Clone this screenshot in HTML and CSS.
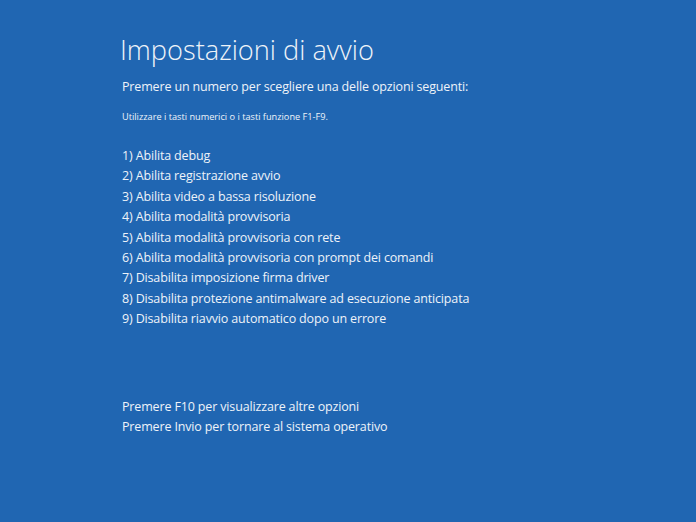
FILE: index.html
```html
<!DOCTYPE html>
<html lang="it">
<head>
<meta charset="utf-8">
<link rel="stylesheet" href="styles.css">
</head>
<body>
<main class="screen">
  <h1 class="title">Impostazioni di avvio</h1>
  <p class="lead">Premere un numero per scegliere una delle opzioni seguenti:</p>
  <p class="hint">Utilizzare i tasti numerici o i tasti funzione F1-F9.</p>
  <ol class="options">
    <li>1) Abilita debug</li>
    <li>2) Abilita registrazione avvio</li>
    <li>3) Abilita video a bassa risoluzione</li>
    <li>4) Abilita modalità provvisoria</li>
    <li>5) Abilita modalità provvisoria con rete</li>
    <li>6) Abilita modalità provvisoria con prompt dei comandi</li>
    <li>7) Disabilita imposizione firma driver</li>
    <li>8) Disabilita protezione antimalware ad esecuzione anticipata</li>
    <li>9) Disabilita riavvio automatico dopo un errore</li>
  </ol>
  <div class="footer">
    <p>Premere F10 per visualizzare altre opzioni</p>
    <p>Premere Invio per tornare al sistema operativo</p>
  </div>
</main>
</body>
</html>
```

FILE: styles.css
```css
html, body {
  margin: 0;
  padding: 0;
  background: #2066b2;
}
.screen {
  width: 696px;
  height: 522px;
  box-sizing: border-box;
  padding: 30px 0 0 120px;
  font-family: "Open Sans", "Noto Sans", sans-serif;
  color: #eef3f9;
  display: flex;
  flex-direction: column;
}
.title {
  margin: 0;
  font-size: 27.2px;
  font-weight: 300;
  line-height: 40px;
}
.lead {
  margin: 7px 0 0 2px;
  font-size: 12.5px;
  letter-spacing: -0.15px;
  line-height: 20px;
}
.hint {
  margin: 14px 0 0 2px;
  font-size: 9.2px;
  line-height: 12px;
}
.options {
  list-style: none;
  margin: 23px 0 0 2px;
  padding: 0;
  font-size: 12.5px;
  letter-spacing: -0.15px;
  line-height: 20.4px;
}
.footer {
  margin: 67px 0 0 2px;
  font-size: 12.5px;
  letter-spacing: -0.15px;
  line-height: 20px;
}
.footer p {
  margin: 0;
}
```
